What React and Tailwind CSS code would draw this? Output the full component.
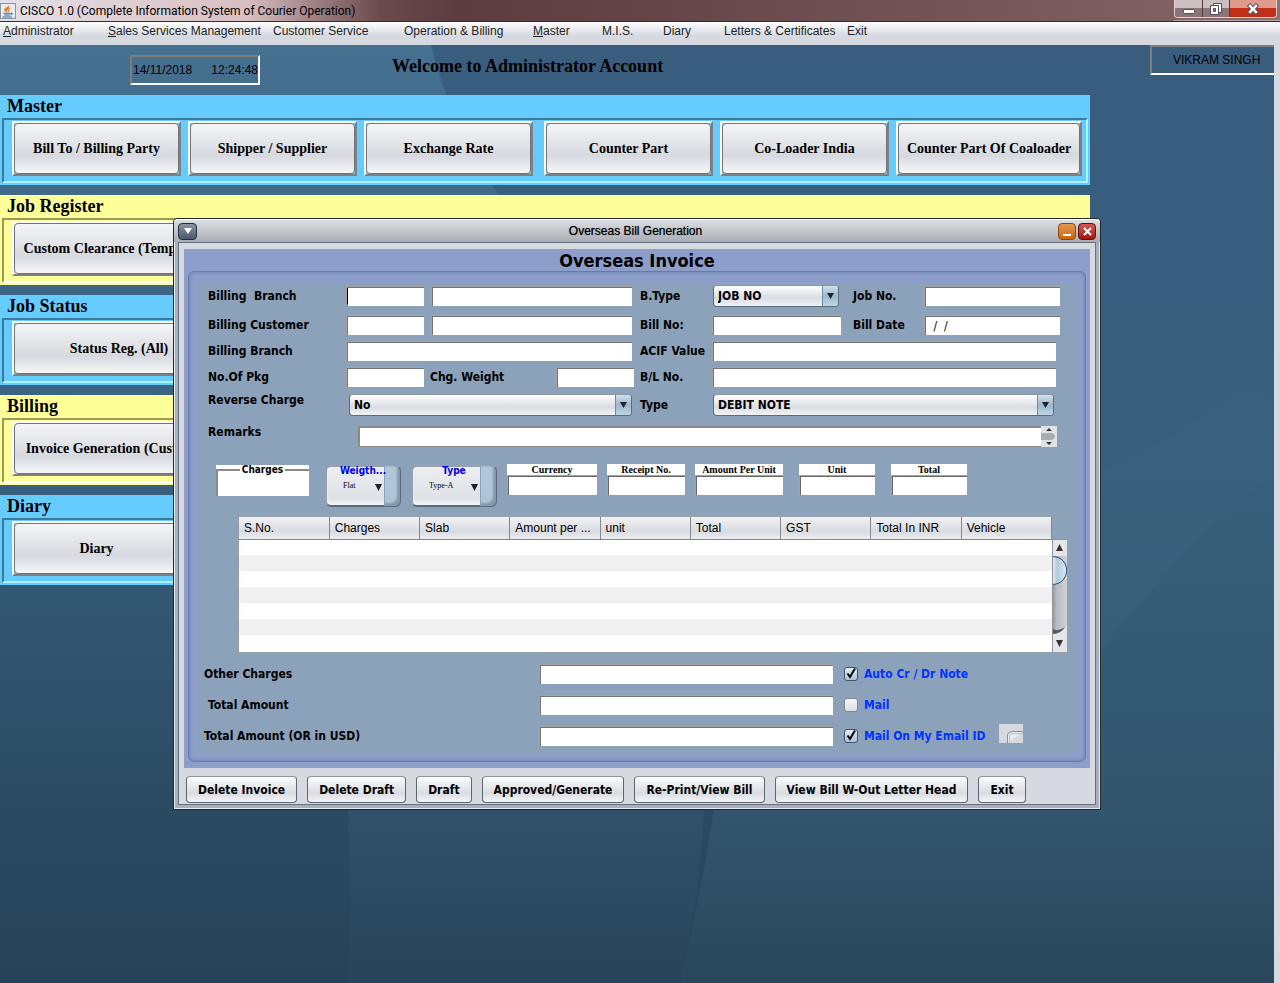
const menus = [
    { text: "Administrator", width: "w-[105px]", mnemonic: true },
    { text: "Sales Services Management", width: "w-[165px]", mnemonic: true },
    { text: "Customer Service", width: "w-[131px]" },
    { text: "Operation & Billing", width: "w-[129px]" },
    { text: "Master", width: "w-[69px]", mnemonic: true },
    { text: "M.I.S.", width: "w-[61px]" },
    { text: "Diary", width: "w-[61px]" },
    { text: "Letters & Certificates", width: "w-[123px]" },
    { text: "Exit", width: "w-[40px]" },
];

const sections = [
    {
        title: "Master",
        color: "blue",
        items: [
            "Bill To / Billing Party",
            "Shipper / Supplier",
            "Exchange Rate",
            "Counter Part",
            "Co-Loader India",
            "Counter Part Of Coaloader",
        ],
    },
    { title: "Job Register", color: "yellow", wide: true, items: ["Custom Clearance (Temporary)"] },
    { title: "Job Status", color: "blue", wide: true, items: ["Status Reg. (All)"] },
    { title: "Billing", color: "yellow", wide: true, items: ["Invoice Generation (Customer)"] },
    { title: "Diary", color: "blue", items: ["Diary"] },
];

const columns = ["S.No.", "Charges", "Slab", "Amount per ...", "unit", "Total", "GST", "Total In INR", "Vehicle"];

const actions = [
    "Delete Invoice",
    "Delete Draft",
    "Draft",
    "Approved/Generate",
    "Re-Print/View Bill",
    "View Bill W-Out Letter Head",
    "Exit",
];

const Wallpaper = () => (
    <svg className="absolute inset-0 h-full w-full" viewBox="0 0 1274 938" preserveAspectRatio="none" aria-hidden="true">
        <defs>
            <linearGradient id="sky" x1="0" y1="0" x2="0" y2="1">
                <stop offset="0" stopColor="#46708f" />
                <stop offset="0.45" stopColor="#38607f" />
                <stop offset="0.8" stopColor="#2b4b63" />
                <stop offset="1" stopColor="#274359" />
            </linearGradient>
            <linearGradient id="right" x1="0" y1="0" x2="0" y2="1">
                <stop offset="0" stopColor="#3a5d7e" />
                <stop offset="0.45" stopColor="#36607c" />
                <stop offset="0.8" stopColor="#33566e" />
                <stop offset="1" stopColor="#2a475c" />
            </linearGradient>
            <linearGradient id="mid" x1="0" y1="0" x2="0" y2="1">
                <stop offset="0" stopColor="#305169" />
                <stop offset="1" stopColor="#28445a" />
            </linearGradient>
        </defs>
        <rect width="1274" height="938" fill="url(#sky)" />
        <path d="M431 0H1274V938H680C700 850 760 600 700 420C640 270 480 200 431 0Z" fill="url(#right)" />
        <path d="M348 765H704Q700 850 680 938H348Q352 850 348 765Z" fill="url(#mid)" />
        <path d="M1090 430Q1200 390 1274 300V430Q1180 500 1090 620Z" fill="#3b6480" opacity="0.35" />
    </svg>
);

const JavaLogo = () => (
    <svg className="h-4 w-4" viewBox="0 0 16 16" aria-hidden="true">
        <rect x="0.5" y="0.5" width="15" height="15" fill="#e9edf3" stroke="#8d93a0" />
        <path d="M8.800 2C10 4-1 6 7 9.500C5.800 7.200 11 6 8.800 2Z" fill="#e8801e" />
        <path d="M10.500 5Q7 6.500 8.800 9" fill="none" stroke="#e8801e" />
        <path d="M3.500 10.200h7M4.200 12h5.600M2.500 14h9.500M11 10q2.500.5-.5 2" fill="none" stroke="#3b6c9b" strokeWidth="1.100" />
    </svg>
);

const TitleBar = () => (
    <header className="flex h-[22px] items-start border-b border-[#3a2a2d] bg-linear-to-r from-[#e6dfe4] from-0% via-[#5c3c3f] via-70% to-[#8f7073] shadow-[inset_0_-1px_0_#b79fa2]">
        <div className="flex h-full w-[380px] items-center gap-1 bg-linear-to-r from-[#e4e0e8] via-[#d9bfc1] via-65% to-[#6a4a4d]">
            <JavaLogo />
            <h1 className="font-['Roboto',sans-serif] text-[12px] whitespace-nowrap text-black">
                CISCO 1.0 (Complete Information System of Courier Operation)
            </h1>
        </div>
        <div className="h-full grow bg-linear-to-r from-[#6a4a4d] via-[#5c3c3f] via-10% to-[#7f6063]" />
        <div className="mr-[3px] flex h-[18px] overflow-hidden rounded-b border border-t-0 border-[#e2d2d3]">
            <button type="button" aria-label="Minimize" className="flex w-7 items-center justify-center border-r border-[#4c3c3f] bg-linear-to-b from-[#cbbfc1] from-45% to-[#8b7377] to-50%">
                <svg className="h-4 w-5" viewBox="0 0 20 16">
                    <rect x="4.500" y="8.500" width="11" height="4" rx="1" fill="#fff" stroke="#4d4f60" />
                </svg>
            </button>
            <button type="button" aria-label="Restore" className="flex w-[27px] items-center justify-center border-r border-[#4c3c3f] bg-linear-to-b from-[#cbbfc1] from-45% to-[#8b7377] to-50%">
                <svg className="h-4 w-5" viewBox="0 0 20 16">
                    <path d="M7.500 2.500h8v9h-8z" fill="#fff" stroke="#4d4f60" />
                    <path d="M4.500 4.500h8v9h-8z" fill="#fff" stroke="#4d4f60" />
                    <path d="M7.500 7.500h2v3h-2z" fill="#8b7377" stroke="#4d4f60" />
                </svg>
            </button>
            <button type="button" aria-label="Close" className="flex w-[46px] items-center justify-center bg-linear-to-b from-[#df9a8c] from-45% to-[#c02f16] to-50%">
                <svg className="h-4 w-5" viewBox="0 0 20 16">
                    <path d="M5.500 3.500L14.500 12.500M14.500 3.500L5.500 12.500" stroke="#4d4f60" strokeWidth="4.500" />
                    <path d="M6.200 4.200L13.800 11.800M13.800 4.200L6.200 11.800" stroke="#fff" strokeWidth="2.600" />
                </svg>
            </button>
        </div>
    </header>
);

const MenuBar = () => (
    <nav className="flex h-[23px] items-start bg-linear-to-b from-white to-[#d6d9df] to-60% pt-px pl-[3px] text-[12px] leading-4 text-[#222]">
        {menus.map((menu) => (
            <button key={menu.text} type="button" className={`${menu.width} shrink-0 text-left whitespace-nowrap`}>
                {menu.mnemonic ? (
                    <>
                        <span className="underline">{menu.text[0]}</span>
                        {menu.text.slice(1)}
                    </>
                ) : (
                    menu.text
                )}
            </button>
        ))}
    </nav>
);

const Section = ({ title, color, wide, items }) => {
    const blue = color === "blue";
    return (
        <section className={`h-[90px] px-[2px] font-['Liberation_Serif',serif] ${blue ? "bg-[#66ccff]" : "bg-[#ffff99]"}`}>
            <h2 className="h-[23px] pl-[5px] text-[18px] leading-[23px] font-bold text-black">{title}</h2>
            <div
                className={`flex h-[65px] gap-[7px] border-2 pt-px pr-[4px] pl-[8px] ${
                    blue
                        ? "border-t-[#3d7a99] border-r-[#a8f4ff] border-b-[#a8f4ff] border-l-[#3d7a99]"
                        : "border-t-[#99995c] border-r-white border-b-white border-l-[#99995c]"
                }`}
            >
                {items.map((item, i) => (
                    <button
                        key={item}
                        type="button"
                        className={`h-[55px] border-2 border-t-white border-r-[#808080] border-b-[#808080] border-l-white ${
                            wide ? "w-[214px]" : "w-[169px]"
                        } ${i === 3 ? "ml-1" : ""} ${i === 5 ? "grow" : "shrink-0"}`}
                    >
                        <span className="flex h-full items-center justify-center rounded border border-[#6f747c] bg-linear-to-b from-[#f4f5f7] via-[#d6d9df] via-65% to-[#f6f7fa] text-[14px] font-bold whitespace-nowrap text-black">
                            {item}
                        </span>
                    </button>
                ))}
            </div>
        </section>
    );
};

const Field = ({ id, label, className = "", ...rest }) => (
    <input
        id={id}
        type="text"
        aria-label={label}
        className={`h-5 min-w-0 border-t border-l border-[#a3a3a3] bg-white px-[5px] text-[12px] font-normal text-black shadow-[inset_1px_1px_0_#747474] outline-none ${className}`}
        {...rest}
    />
);

const Combo = ({ id, options, className = "" }) => (
    <div className={`relative h-[22px] ${className}`}>
        <select
            id={id}
            className="h-full w-full appearance-none rounded border border-[#5c6b7c] border-t-[#8d96a3] bg-linear-to-b from-white via-[#d9dce2] via-60% to-[#f2f3f6] pl-1 text-[12px] font-bold text-black outline-none"
        >
            {options.map((option) => (
                <option key={option}>{option}</option>
            ))}
        </select>
        <span className="pointer-events-none absolute inset-y-px right-px flex w-4 items-center justify-center rounded-r-[3px] border-l border-[#6d8aa5] bg-linear-to-b from-[#d3e0eb] via-[#9db8ce] to-[#bed6e6]">
            <svg className="h-[6px] w-[7px]" viewBox="0 0 7 6" aria-hidden="true">
                <path d="M0 0H7L3.500 6Z" fill="#1c2229" />
            </svg>
        </span>
    </div>
);

const TitledCombo = ({ id, label, option, className }) => (
    <div className={`relative h-[42px] ${className}`}>
        <label htmlFor={id} className="absolute inset-x-0 top-0 z-10 text-center text-[10px] leading-3 font-bold text-[#0000f0]">
            {label}
        </label>
        <select
            id={id}
            className="h-full w-full appearance-none rounded-md border-2 border-[#5c6b7c] border-t-[#9a9fa8] border-l-[#9a9fa8] bg-linear-to-b from-[#eceef1] to-[#dcdfe4] pl-4 font-['Liberation_Serif',serif] text-[8px] font-normal text-black shadow-[inset_0_-4px_3px_#fff9] outline-none"
        >
            <option>{option}</option>
        </select>
        <span className="pointer-events-none absolute inset-y-px right-px w-4 rounded-r-md border-l border-[#8aa3b9] bg-[#a3bdd2]/80 shadow-[inset_-3px_-3px_2px_#8299ae]" />
        <svg className="pointer-events-none absolute top-[19px] right-[19px] h-[7px] w-[7px]" viewBox="0 0 7 7" aria-hidden="true">
            <path d="M0 0H7L3.500 7Z" fill="#1c2229" />
        </svg>
    </div>
);

const TitledField = ({ id, label, className }) => (
    <div className={`flex h-[31px] flex-col bg-white ${className}`}>
        <label htmlFor={id} className="h-[11px] text-center font-['Liberation_Serif',serif] text-[10px] leading-[11px] font-bold whitespace-nowrap text-black">
            {label}
        </label>
        <input id={id} type="text" className="w-full grow border-t border-l border-[#a3a3a3] bg-white shadow-[inset_1px_1px_0_#696969] outline-none" />
    </div>
);

const ROW = "grid grid-cols-[138px_minmax(0,294fr)_72px_minmax(0,364fr)] items-center pl-[10px]";

const InvoiceForm = () => (
    <div className="flex flex-col pt-[3px]">
        <div className={`${ROW} mb-[9px]`}>
            <label htmlFor="branch" className="whitespace-pre">{"Billing  Branch"}</label>
            <div className="relative flex gap-[7px] pr-2">
                <Field id="branch" className="w-[78px] shrink-0" />
                <span className="pointer-events-none absolute top-[2px] left-px h-4 w-px bg-black" />
                <Field label="Billing branch name" className="grow" />
            </div>
            <label htmlFor="btype">B.Type</label>
            <div className="-my-px flex items-center pr-4">
                <Combo id="btype" options={["JOB NO"]} className="ml-px w-[126px] shrink-0" />
                <label htmlFor="jobno" className="ml-[14px] w-[71px] shrink-0">Job No.</label>
                <Field id="jobno" className="grow" />
            </div>
        </div>
        <div className={`${ROW} mb-[6px]`}>
            <label htmlFor="customer">Billing Customer</label>
            <div className="flex gap-[7px] pr-2">
                <Field id="customer" className="w-[78px] shrink-0" />
                <Field label="Billing customer name" className="grow" />
            </div>
            <label htmlFor="billno">Bill No:</label>
            <div className="flex items-center pr-4">
                <Field id="billno" className="w-[129px] shrink-0" />
                <label htmlFor="billdate" className="ml-3 w-[71px] shrink-0">Bill Date</label>
                <Field id="billdate" defaultValue=" /  /" className="grow" />
            </div>
        </div>
        <div className={`${ROW} mb-[6px]`}>
            <label htmlFor="branch2">Billing Branch</label>
            <Field id="branch2" className="mr-2" />
            <label htmlFor="acif">ACIF Value</label>
            <Field id="acif" className="mr-5" />
        </div>
        <div className={`${ROW} mb-[7px]`}>
            <label htmlFor="pkg">No.Of Pkg</label>
            <div className="flex items-center pr-[6px]">
                <Field id="pkg" className="w-[78px]" />
                <label htmlFor="weight" className="ml-[6px] grow">Chg. Weight</label>
                <Field id="weight" className="w-[78px]" />
            </div>
            <label htmlFor="blno">B/L No.</label>
            <Field id="blno" className="mr-5" />
        </div>
        <div className={`${ROW} mb-[10px]`}>
            <label htmlFor="reverse" className="self-start leading-3">Reverse Charge</label>
            <Combo id="reverse" options={["No", "Yes"]} className="mr-2 ml-[3px]" />
            <label htmlFor="type">Type</label>
            <Combo id="type" options={["DEBIT NOTE", "CREDIT NOTE"]} className="mr-[22px] ml-px" />
        </div>
        <div className="flex h-[21px] pr-[19px] pl-[10px]">
            <label htmlFor="remarks" className="w-[150px] shrink-0 leading-3">Remarks</label>
            <textarea id="remarks" className="h-full min-w-0 grow resize-none overflow-hidden border-t-2 border-b border-l-2 border-[#8a8a8a] bg-white outline-none" />
            <svg className="h-full w-4" viewBox="0 0 16 21" aria-hidden="true">
                <rect width="16" height="21" fill="#dfe2e6" />
                <path d="M0 7H10Q14 8 14 10.500Q14 13 10 14H0Z" fill="#a8abb1" />
                <path d="M5 5L8 2L11 5ZM5 16L8 19L11 16Z" fill="#333" />
            </svg>
        </div>
    </div>
);

const ChargesBar = () => (
    <div className="mt-[17px] flex h-[43px] items-start pl-[18px]">
        <div className="mt-px flex h-[31px] w-[93px] flex-col bg-white">
            <label htmlFor="charges" className="flex h-[9px] items-center gap-[2px] text-[10px] text-black before:h-[2px] before:grow before:bg-[#8a8a8a] after:h-[2px] after:grow after:bg-[#8a8a8a]">
                Charges
            </label>
            <input id="charges" type="text" className="-mt-1 w-full grow border-l-2 border-[#8a8a8a] outline-none" />
        </div>
        <TitledCombo id="slab" label="Weigth..." option="Flat" className="mt-px ml-4 w-[76px]" />
        <TitledCombo id="ctype" label="Type" option="Type-A" className="mt-px ml-[10px] w-[86px]" />
        <TitledField id="currency" label="Currency" className="ml-[10px] w-[90px]" />
        <TitledField id="receipt" label="Receipt No." className="ml-[10px] w-[78px]" />
        <TitledField id="perunit" label="Amount Per Unit" className="ml-[10px] w-[88px]" />
        <TitledField id="unit" label="Unit" className="ml-4 w-[76px]" />
        <TitledField id="total" label="Total" className="ml-4 w-[76px]" />
    </div>
);

const ChargesTable = () => (
    <div className="mt-[9px] mr-2 ml-10 flex h-[137px] border border-[#98a0a8]">
        <div className="min-w-0 grow overflow-hidden bg-white">
            <table className="w-full table-fixed border-collapse font-['Liberation_Sans',sans-serif] text-[12px] text-black">
                <thead>
                    <tr className="h-[22px] bg-linear-to-b from-[#f1f2f4] via-[#d8dbe1] via-65% to-[#eceef1]">
                        {columns.map((column) => (
                            <th key={column} className="border-r border-b border-[#83888f] px-[5px] text-left font-normal whitespace-nowrap">
                                {column}
                            </th>
                        ))}
                    </tr>
                </thead>
                <tbody>
                    {[1, 2, 3, 4, 5, 6, 7].map((row) => (
                        <tr key={row} className="h-4 even:bg-[#f0f0f0]">
                            {columns.map((column) => (
                                <td key={column} />
                            ))}
                        </tr>
                    ))}
                </tbody>
            </table>
        </div>
        <svg className="mt-[22px] h-[113px] w-[15px] shrink-0" viewBox="0 0 15 113" aria-hidden="true">
            <defs>
                <linearGradient id="track">
                    <stop offset="0" stopColor="#8d8f94" />
                    <stop offset="0.300" stopColor="#b8babe" />
                    <stop offset="1" stopColor="#d0d2d6" />
                </linearGradient>
                <linearGradient id="thumb">
                    <stop offset="0" stopColor="#e8f2f9" />
                    <stop offset="0.350" stopColor="#b3c9dc" />
                    <stop offset="1" stopColor="#d5ecf8" />
                </linearGradient>
            </defs>
            <rect width="15" height="113" fill="#e4e6e9" />
            <path d="M0 17H15V86Q10 95 0 95Z" fill="url(#track)" />
            <path d="M0 95V90Q7 93 13 88Q9 95 0 95Z" fill="#55585e" />
            <path d="M0 17.500C20 17.500 19 45.500 0 45.500Z" fill="url(#thumb)" stroke="#2f4a62" />
            <path d="M0.500 0V113M0 0.500H15" stroke="#93979d" />
            <path d="M4 12L7.500 5L11 12ZM4 101L7.500 108L11 101Z" fill="#333" />
        </svg>
    </div>
);

const Check = ({ id, label, checked = false }) => (
    <div className="flex items-center text-[#0033ff]">
        <span className="relative mr-[6px] h-[14px] w-[14px]">
            <input
                id={id}
                type="checkbox"
                defaultChecked={checked}
                className="peer block h-[14px] w-[14px] appearance-none rounded-[3px] border border-[#7f8791] bg-linear-to-b from-[#f5f6f8] to-[#dcdfe4] checked:border-[#3f5468] checked:from-[#e3edf5] checked:to-[#a9c4d9]"
            />
            <svg className="pointer-events-none absolute top-0 left-0 hidden h-[14px] w-[14px] peer-checked:block" viewBox="0 0 14 14" aria-hidden="true">
                <path d="M3.500 6.500L6 10L11 1.500" fill="none" stroke="#000" strokeWidth="2" />
            </svg>
        </span>
        <label htmlFor={id}>{label}</label>
    </div>
);

const Totals = () => (
    <div className="mt-[11px] flex flex-col gap-[11px] pl-[6px]">
        <div className="flex h-5 items-center">
            <label htmlFor="other" className="w-[335px]">Other Charges</label>
            <Field id="other" className="mr-[11px] w-[294px]" />
            <Check id="auto" label="Auto Cr / Dr Note" checked />
        </div>
        <div className="flex h-5 items-center">
            <label htmlFor="amount" className="w-[335px] pl-1">Total Amount</label>
            <Field id="amount" className="mr-[11px] w-[294px]" />
            <Check id="mail" label="Mail" />
        </div>
        <div className="flex h-5 items-center">
            <label htmlFor="usd" className="w-[335px]">Total Amount (OR in USD)</label>
            <Field id="usd" className="mr-[11px] w-[294px]" />
            <Check id="mymail" label="Mail On My Email ID" checked />
            <svg className="mb-[5px] ml-[14px] h-[19px] w-6" viewBox="0 0 24 19" aria-hidden="true">
                <rect width="24" height="19" fill="#d6d9df" />
                <path d="M8.500 19V11Q9 7.500 13 7.500H24" fill="#e9ebee" stroke="#8b8f96" />
                <path d="M10.500 19V12Q11 9.500 14 9.500H24" fill="none" stroke="#bdc0c6" />
            </svg>
        </div>
    </div>
);

const InvoiceWindow = () => (
    <div
        role="dialog"
        aria-label="Overseas Bill Generation"
        className="absolute top-[173px] right-[173px] left-[173px] rounded-t-sm border border-[#23272e] bg-[#a7b0ba] px-1 pb-1 font-['DejaVu_Sans_Condensed','DejaVu_Sans',sans-serif] text-[12px] font-bold text-black shadow-[inset_0_0_0_1px_#e8eaed]"
    >
        <div className="-mx-1 flex h-[23px] items-center rounded-t-sm border-t border-white bg-linear-to-b from-[#dcdee2] to-[#a9adb5] px-1">
            <button type="button" aria-label="Window menu" className="flex h-[17px] w-[19px] items-center justify-center rounded border border-[#262d3a] bg-linear-to-b from-[#8b93a3] to-[#4e586b]">
                <svg className="h-[6px] w-2" viewBox="0 0 8 6">
                    <path d="M0 0H8L4 6Z" fill="#fff" />
                </svg>
            </button>
            <div className="grow pl-4 text-center font-['Liberation_Sans',sans-serif] font-normal [text-shadow:0_0_1px_#0009]">
                Overseas Bill Generation
            </div>
            <button type="button" aria-label="Minimize window" className="mr-[2px] flex h-[17px] w-[18px] items-end justify-center rounded border border-[#8a4a08] bg-linear-to-b from-[#e09a50] to-[#c96500] pb-[3px]">
                <span className="h-[2px] w-2 bg-white" />
            </button>
            <button type="button" aria-label="Close window" className="flex h-[17px] w-[18px] items-center justify-center rounded border border-[#5e1010] bg-linear-to-b from-[#cf5a55] to-[#a3120e]">
                <svg className="h-[9px] w-[9px]" viewBox="0 0 9 9">
                    <path d="M1 1L8 8M8 1L1 8" stroke="#fff" strokeWidth="2" />
                </svg>
            </button>
        </div>
        <div className="border border-[#66717f] bg-[#d6d9df] px-[5px] pt-[6px] pb-px">
            <div className="bg-[#8c9ec9] px-1 pb-[6px]">
                <h2 className="h-[22px] text-center text-[18px] leading-6">Overseas Invoice</h2>
                <div className="rounded-md border border-[#687ba4] px-[9px] pt-[11px] pb-[7px] shadow-[inset_0_0_3px_1px_#7287b3]">
                    <div className="bg-[#8ca2ba] pb-2">
                        <InvoiceForm />
                        <ChargesBar />
                        <ChargesTable />
                        <Totals />
                    </div>
                </div>
            </div>
            <div className="mt-2 flex gap-[10px] pl-[2px]">
                {actions.map((action) => (
                    <button
                        key={action}
                        type="button"
                        className="h-[27px] rounded border border-[#5f656d] border-t-[#8f949b] bg-linear-to-b from-[#fafbfc] via-[#d9dce2] via-65% to-[#f4f5f8] px-[11px] whitespace-nowrap"
                    >
                        {action}
                    </button>
                ))}
            </div>
        </div>
    </div>
);

const App = () => {
    return (
        <div className="flex min-h-screen flex-col overflow-hidden font-['Liberation_Sans',sans-serif]">
            <TitleBar />
            <MenuBar />
            <main className="relative flex grow flex-col border-r-[6px] border-[#d6d9df]">
                <Wallpaper />
                <div className="relative flex h-[50px] items-start text-black">
                    <div className="mt-[10px] ml-[130px] flex h-[30px] w-[130px] shrink-0 items-center justify-between border-2 border-t-[#7d7d7d] border-r-white border-b-white border-l-[#7d7d7d] pl-px text-[12px]">
                        <span>14/11/2018</span>
                        <span>12:24:48</span>
                    </div>
                    <p className="mt-2 ml-[132px] grow font-['Liberation_Serif',serif] text-[18px] font-bold">
                        Welcome to Administrator Account
                    </p>
                    <div className="flex h-[30px] w-[124px] items-center border-t-2 border-b-2 border-l-2 border-t-[#7d7d7d] border-b-white border-l-[#7d7d7d] pl-[21px] text-[12px] whitespace-nowrap">
                        VIKRAM SINGH
                    </div>
                </div>
                <div className="relative mr-[184px] flex flex-col gap-[10px]">
                    {sections.map((section) => (
                        <Section key={section.title} {...section} />
                    ))}
                </div>
                <InvoiceWindow />
            </main>
        </div>
    );
};

export default App;
